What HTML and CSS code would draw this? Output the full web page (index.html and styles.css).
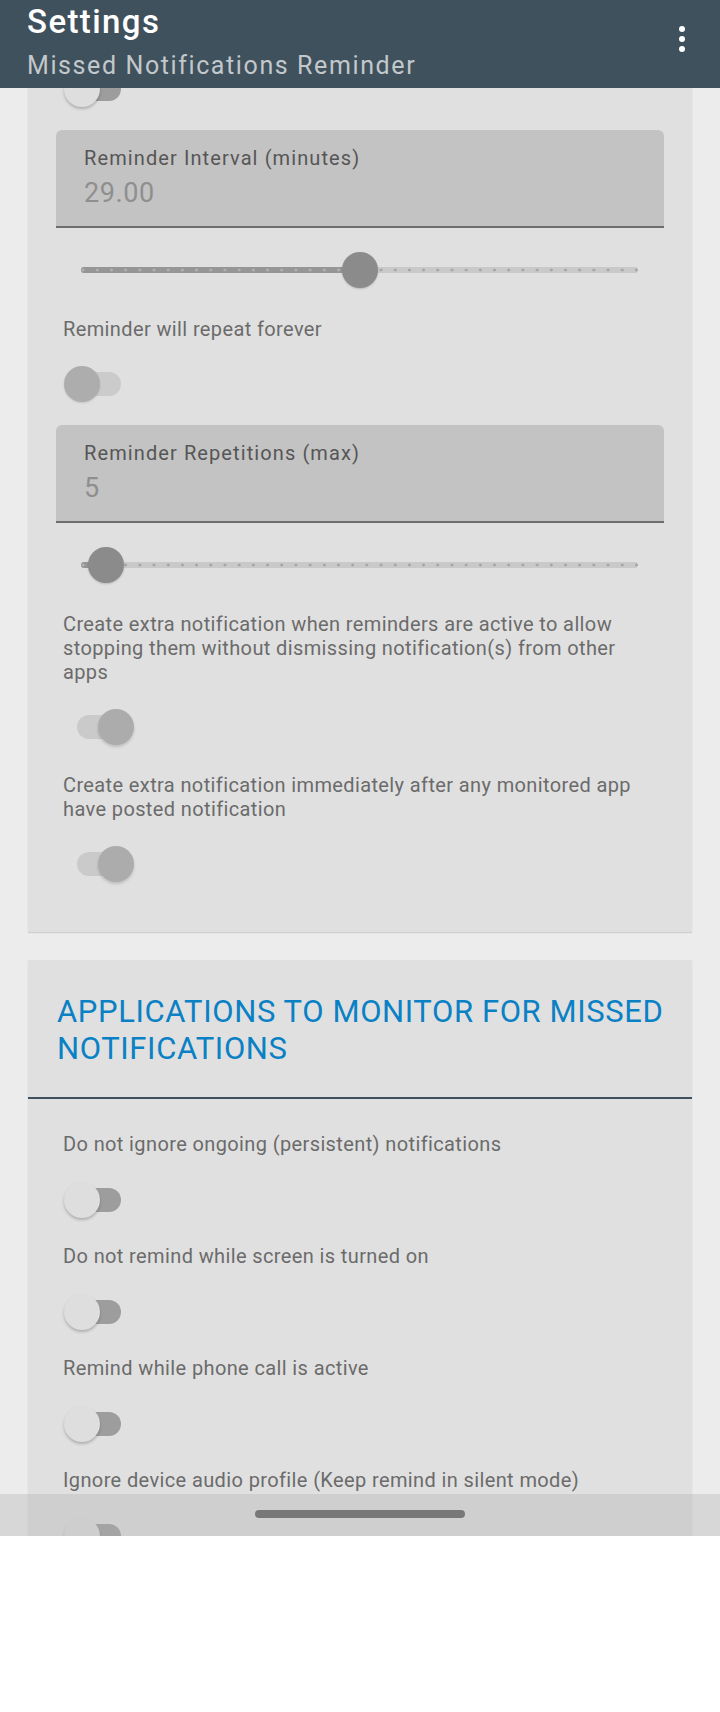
FILE: index.html
```html
<!DOCTYPE html>
<html lang="en">
<head>
<meta charset="utf-8">
<title>Settings</title>
<link rel="stylesheet" href="styles.css">
</head>
<body>
<div class="screen">
  <header class="appbar">
    <div class="titles">
      <div class="title">Settings</div>
      <div class="subtitle">Missed Notifications Reminder</div>
    </div>
    <div class="menu" aria-label="More options"><span></span><span></span><span></span></div>
  </header>

  <main class="content">
    <section class="card card-first">
      <div class="switch switch-off top-switch"><span class="track"></span><span class="thumb"></span></div>

      <div class="field">
        <div class="field-label">Reminder Interval (minutes)</div>
        <div class="field-value">29.00</div>
      </div>
      <div class="slider">
        <div class="slider-track"><div class="slider-fill" style="width:50.1%"></div></div>
        <div class="slider-thumb" style="left:50.1%"></div>
      </div>

      <div class="pref pref-after-slider">
        <p class="pref-text">Reminder will repeat forever</p>
        <div class="switch switch-disabled"><span class="track"></span><span class="thumb"></span></div>
      </div>

      <div class="field">
        <div class="field-label">Reminder Repetitions (max)</div>
        <div class="field-value">5</div>
      </div>
      <div class="slider">
        <div class="slider-track"><div class="slider-fill" style="width:4.5%"></div></div>
        <div class="slider-thumb" style="left:4.5%"></div>
      </div>

      <div class="pref pref-after-slider">
        <p class="pref-text">Create extra notification when reminders are active to allow stopping them without dismissing notification(s) from other apps</p>
        <div class="switch switch-on"><span class="track"></span><span class="thumb"></span></div>
      </div>

      <div class="pref pref-next">
        <p class="pref-text">Create extra notification immediately after any monitored app have posted notification</p>
        <div class="switch switch-on"><span class="track"></span><span class="thumb"></span></div>
      </div>
    </section>

    <section class="card card-second">
      <h2 class="card-header">APPLICATIONS TO MONITOR FOR MISSED NOTIFICATIONS</h2>
      <div class="pref-list">
        <div class="pref">
          <p class="pref-text">Do not ignore ongoing (persistent) notifications</p>
          <div class="switch switch-off"><span class="track"></span><span class="thumb"></span></div>
        </div>
        <div class="pref">
          <p class="pref-text">Do not remind while screen is turned on</p>
          <div class="switch switch-off"><span class="track"></span><span class="thumb"></span></div>
        </div>
        <div class="pref">
          <p class="pref-text">Remind while phone call is active</p>
          <div class="switch switch-off"><span class="track"></span><span class="thumb"></span></div>
        </div>
        <div class="pref">
          <p class="pref-text">Ignore device audio profile (Keep remind in silent mode)</p>
          <div class="switch switch-off"><span class="track"></span><span class="thumb"></span></div>
        </div>
      </div>
    </section>
  </main>

  <div class="navbar"><span class="handle"></span></div>
</div>
</body>
</html>
```

FILE: styles.css
```css
* { box-sizing: border-box; }

html, body {
  margin: 0;
  padding: 0;
  background: #ffffff;
}

body {
  font-family: Roboto, "Noto Sans", "Liberation Sans", sans-serif;
}

.screen {
  position: relative;
  width: 720px;
  height: 1536px;
  overflow: hidden;
  background: #ececec;
}

/* App bar */
.appbar {
  position: absolute;
  top: 0;
  left: 0;
  right: 0;
  height: 88px;
  background: #3f515d;
  z-index: 5;
  display: flex;
  justify-content: space-between;
  padding: 3px 0 0 27px;
}

.title {
  color: #ffffff;
  font-size: 33px;
  font-weight: 500;
  line-height: 38px;
  letter-spacing: 1.4px;
}

.subtitle {
  margin-top: 10px;
  color: #c3c8cb;
  font-size: 25px;
  line-height: 30px;
  letter-spacing: 1.6px;
}

.menu {
  display: flex;
  flex-direction: column;
  gap: 4px;
  padding: 23px 35px 0 0;
}

.menu span {
  width: 6px;
  height: 6px;
  border-radius: 50%;
  background: #ffffff;
}

/* Content */
.content {
  padding: 0 28px;
}

.card {
  background: #e0e0e0;
  box-shadow: 0 1px 1px rgba(0, 0, 0, 0.12);
}

.card-first {
  padding-bottom: 50px;
}

.card-second {
  margin-top: 28px;
}

.top-switch {
  margin-top: 71px;
}

/* Text field */
.field {
  margin: 23px 28px 0;
  height: 98px;
  padding: 17px 28px 0;
  background: #c3c3c3;
  border-radius: 6px 6px 0 0;
  border-bottom: 2px solid #6e6e6e;
}

.field-label {
  font-size: 20px;
  line-height: 22px;
  color: #565656;
  letter-spacing: 1.1px;
}

.field-value {
  margin-top: 8px;
  font-size: 27px;
  line-height: 32px;
  color: #8f8f8f;
  letter-spacing: 0.6px;
}

/* Slider */
.slider {
  position: relative;
  margin: 24px 54px 0 53px;
  height: 36px;
}

.slider-track {
  position: absolute;
  left: 0;
  right: 0;
  top: 15px;
  height: 6px;
  border-radius: 3px;
  background-color: #c9c9c9;
  background-image: radial-gradient(circle, #a6a6a6 1.3px, transparent 1.7px);
  background-size: 14.2px 6px;
  background-position: -5px 0;
  background-repeat: repeat-x;
  overflow: hidden;
}

.slider-fill {
  height: 100%;
  background-color: #969696;
  background-image: radial-gradient(circle, #b0b0b0 1.3px, transparent 1.7px);
  background-size: 14.2px 6px;
  background-position: -5px 0;
  background-repeat: repeat-x;
}

.slider-thumb {
  position: absolute;
  top: 0;
  width: 36px;
  height: 36px;
  margin-left: -18px;
  border-radius: 50%;
  background: #8b8b8b;
  box-shadow: 0 1px 2px rgba(0, 0, 0, 0.18);
}

/* Preferences */
.pref {
  padding: 0 35px;
}

.pref-after-slider {
  padding-top: 29px;
}

.pref-next {
  padding-top: 28px;
}

.pref-text {
  margin: 0;
  font-size: 20px;
  line-height: 24px;
  color: #6b6b6b;
  letter-spacing: 0.38px;
}

.pref-text + .switch {
  margin-top: 25px;
}

.pref-list {
  padding-top: 33px;
}

.pref-list .pref-text + .switch {
  margin-top: 26px;
  margin-bottom: 26px;
}

/* Switch */
.switch {
  position: relative;
  width: 70px;
  height: 36px;
  margin-left: 36px;
}

.pref .switch {
  margin-left: 1px;
}

.switch .track {
  position: absolute;
  left: 13px;
  top: 6px;
  width: 44px;
  height: 24px;
  border-radius: 12px;
}

.switch .thumb {
  position: absolute;
  top: 0;
  width: 36px;
  height: 36px;
  border-radius: 50%;
  box-shadow: 0 2px 3px rgba(0, 0, 0, 0.22);
}

.switch-off .track { background: #9d9d9d; }
.switch-off .thumb { left: 0; background: #dedede; }

.switch-disabled .track { background: #cbcbcb; }
.switch-disabled .thumb { left: 0; background: #adadad; box-shadow: 0 1px 2px rgba(0, 0, 0, 0.12); }

.switch-on .track { background: #cacaca; }
.switch-on .thumb { right: 0; background: #acacac; box-shadow: 0 2px 3px rgba(0, 0, 0, 0.15); }

/* Category header */
.card-header {
  margin: 0;
  padding: 33px 12px 30px 29px;
  font-size: 31px;
  font-weight: 400;
  line-height: 37px;
  color: #0a80c5;
  letter-spacing: 0.6px;
  border-bottom: 2px solid #3f515d;
}

/* Navigation bar */
.navbar {
  position: absolute;
  left: 0;
  right: 0;
  bottom: 0;
  height: 42px;
  background: rgba(178, 178, 178, 0.36);
  display: flex;
  justify-content: center;
  padding-top: 16px;
  z-index: 5;
}

.handle {
  width: 210px;
  height: 8px;
  border-radius: 4px;
  background: #787878;
}
```
